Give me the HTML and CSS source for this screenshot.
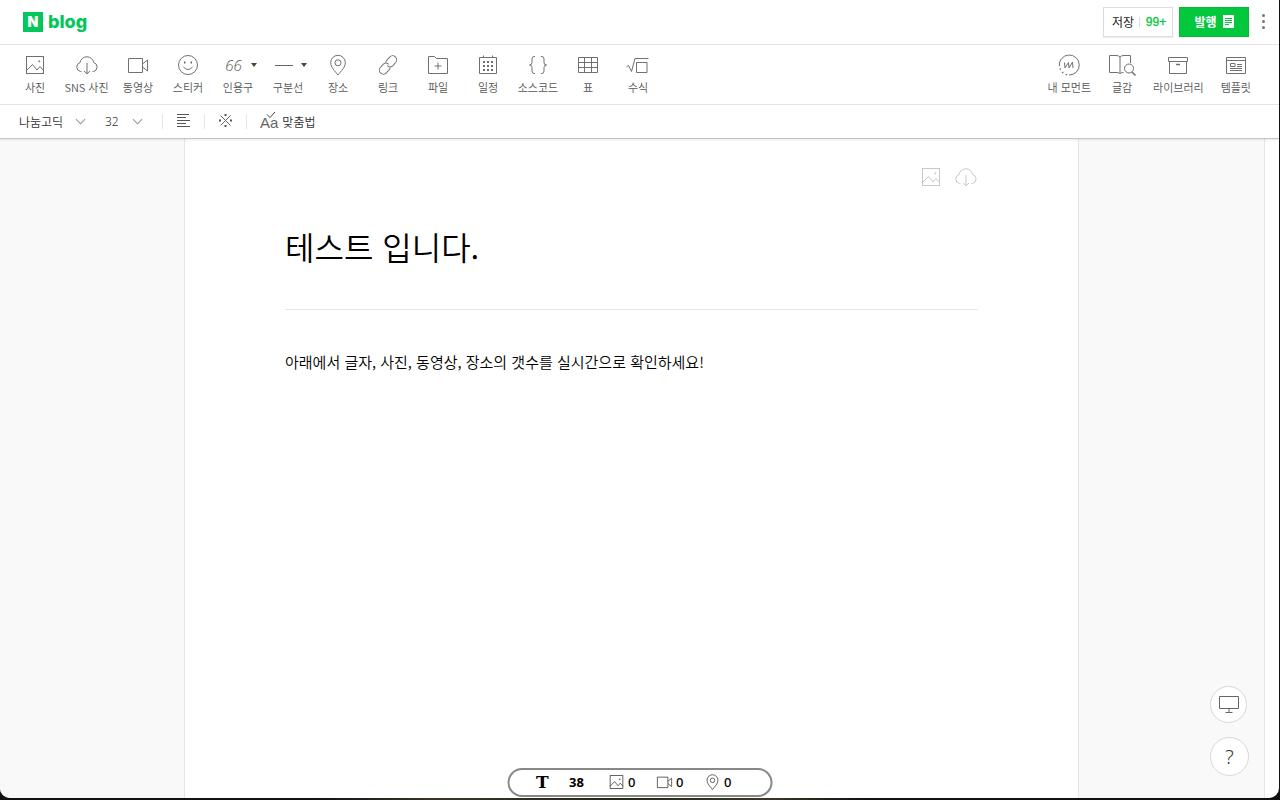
FILE: index.html
```html
<!DOCTYPE html>
<html lang="ko">
<head>
<meta charset="utf-8">
<title>blog</title>
<link rel="stylesheet" href="styles.css">
</head>
<body>
<svg class="defs" aria-hidden="true">
  <symbol id="photo" viewBox="0 0 24 24"><rect x="3.5" y="3.5" width="17" height="17"/><path d="M3.5 17.5 9.500 11.5 14 17 17 13.5 20.5 17.5"/><circle cx="16.300" cy="8.300" r="0.6"/></symbol>
  <symbol id="cloud" viewBox="0 0 24 24"><path d="M6.500 18.5H5.500A4.600 4.600 0 0 1 5 9.600 7 7 0 0 1 18.800 9.600 4.600 4.600 0 0 1 18.500 18.500H17.500M12 10V21M9 18 12 20.800 15 18"/></symbol>
  <symbol id="video" viewBox="0 0 24 24"><path d="M2.500 5.500H16.500V19.500H2.500ZM16.500 11 21.500 7V18L16.500 14"/></symbol>
  <symbol id="pin" viewBox="0 0 24 24"><path d="M12 22C9 18 4.700 14.500 4.700 9.600A7.300 7.300 0 0 1 19.300 9.600C19.300 14.500 15 18 12 22Z"/><circle cx="12" cy="9.800" r="3"/></symbol>
</svg>
<div class="window">
  <header class="header">
    <a class="logo" href="#"><span class="logo-mark">N</span><span class="logo-text">blog</span></a>
    <div class="actions">
      <div class="save"><button class="save-btn" type="button">저장</button><button class="save-count" type="button">99+</button></div>
      <button class="publish" type="button">발행
        <svg width="11" height="13" viewBox="0 0 11 13"><path d="M0 0H11V13H0Z" fill="#fff"/><path d="M2 3.500H9M2 5.500H9M2 7.500H9M2 9.500H6" stroke="#03c73c"/></svg>
      </button>
      <button class="more" type="button" aria-label="더보기"><i></i><i></i><i></i></button>
    </div>
  </header>

  <nav class="toolbar">
    <div class="tools">
      <button class="tool" type="button"><svg class="icon"><use href="#photo"/></svg>사진</button>
      <button class="tool tool-wide" type="button"><svg class="icon"><use href="#cloud"/></svg>SNS 사진</button>
      <button class="tool" type="button"><svg class="icon"><use href="#video"/></svg>동영상</button>
      <button class="tool" type="button"><svg class="icon" viewBox="0 0 24 24"><circle cx="12" cy="12" r="9.500"/><path d="M7.500 14Q12 19 16.500 14"/><path class="solid" d="M8 8.500H9.500V10.500H8ZM14.500 8.500H16V10.500H14.500Z"/></svg>스티커</button>
      <button class="tool" type="button"><span class="split"><span class="quote">66</span><i class="caret"></i></span>인용구</button>
      <button class="tool" type="button"><span class="split"><span class="dash"></span><i class="caret"></i></span>구분선</button>
      <button class="tool" type="button"><svg class="icon"><use href="#pin"/></svg>장소</button>
      <button class="tool" type="button"><svg class="icon" viewBox="0 0 24 24"><g transform="rotate(-48 12 12)"><path d="M11 12A4 4 0 0 0 14.500 16H19A4 4 0 0 0 19 8H14.500Q13.500 8 12.500 8.700"/><path d="M13 12A4 4 0 0 0 9.500 8H5A4 4 0 0 0 5 16H9.500Q10.500 16 11.500 15.300"/></g></svg>링크</button>
      <button class="tool" type="button"><svg class="icon" viewBox="0 0 24 24"><path d="M2.500 3.500H8.500L10.500 5.500H21.500V20.500H2.500ZM12 9.500V16.500M8.500 13H15.500"/></svg>파일</button>
      <button class="tool" type="button"><svg class="icon" viewBox="0 0 24 24"><path d="M3.500 4.500H20.500V20.500H3.500ZM7.500 2.500V5M16.500 2.500V5"/><path d="M7 9H17M7 13H17M7 17H17" stroke-dasharray="2 2" stroke-width="2"/></svg>일정</button>
      <button class="tool" type="button"><svg class="icon" viewBox="0 0 24 24"><path d="M9 3.500H8Q6 3.500 6 6V9.500Q6 12 3.500 12 6 12 6 14.500V18Q6 20.500 8 20.500H9M15 3.500H16Q18 3.500 18 6V9.500Q18 12 20.500 12 18 12 18 14.500V18Q18 20.500 16 20.500H15"/></svg>소스코드</button>
      <button class="tool" type="button"><svg class="icon" viewBox="0 0 24 24"><path d="M2.500 4.500H21.500V19.500H2.500ZM8.500 4.500V19.500M15.500 4.500V19.500M2.500 9.500H21.500M2.500 14.500H21.500"/></svg>표</button>
      <button class="tool" type="button"><svg class="icon" viewBox="0 0 24 24"><path d="M0.500 14 2.500 12.500 5.500 18.500 9 5.500H22.500M10.500 9.500H21V19.500H10.500Z"/></svg>수식</button>
    </div>
    <div class="panels">
      <button class="panel" type="button"><svg class="icon" viewBox="0 0 24 24"><path d="M2.300 13A10 10 0 1 1 12 22"/><path d="M3 15.500 3.500 16.700M5.200 19 6.200 20M8.700 21.400 10 21.800" stroke-width="1.500"/><path d="M7.500 9.500 8 15 11.500 9.500 12 15 15.500 9 16 15"/></svg>내 모먼트</button>
      <button class="panel" type="button"><svg class="icon icon-wide" viewBox="0 0 28 24"><path d="M12 20.500Q11 19.500 8 19.500H1.500V2.500H8Q11 2.500 12 4 13 2.500 16 2.500H22.500V10M12 4V20.500M12 20.500Q13 19.500 15.500 19.500"/><circle cx="21" cy="15.500" r="4.500"/><path d="M24 19 27.500 22.500" stroke-width="1.500"/></svg>글감</button>
      <button class="panel" type="button"><svg class="icon" viewBox="0 0 24 24"><path d="M2.500 4.500H21.500V8.500H2.500ZM3.500 8.500V20.500H20.500V8.500"/><path d="M10 11.500H14" stroke-width="1.500"/></svg>라이브러리</button>
      <button class="panel" type="button"><svg class="icon" viewBox="0 0 24 24"><path d="M2.500 4.500H21.500V20.500H2.500ZM2.500 7.500H21.500M6.500 10.500H11V13.500H6.500ZM13 11.500H18M13 13.500H18M6 15.500H18M6 17.500H18"/></svg>템플릿</button>
    </div>
  </nav>

  <div class="format">
    <button class="pick pick-font" type="button">나눔고딕<i class="chevron"></i></button>
    <button class="pick pick-size" type="button">32<i class="chevron"></i></button>
    <button class="cell" type="button" aria-label="정렬"><svg width="14" height="14" viewBox="0 0 14 14"><path d="M0 0.500H12M0 3.500H9M0 6.500H13M0 9.500H9M0 12.500H13" stroke="#555"/></svg></button>
    <button class="cell" type="button" aria-label="특수문자"><svg width="14" height="14" viewBox="0 0 14 14"><path d="M1.500 1.500 11.500 11.500M11.500 1.500 1.500 11.500" stroke="#666"/><path d="M5.500 0H7.500V2H5.500ZM5.500 11H7.500V13H5.500ZM0 5.500H2V7.500H0ZM11 5.500H13V7.500H11Z" fill="#555"/></svg></button>
    <button class="cell spell" type="button"><span class="aa">Aa<svg class="check" width="10" height="8" viewBox="0 0 10 8"><path d="M1 3.500 4 6.500 9 1" stroke="#444"/></svg></span>맞춤법</button>
  </div>

  <main class="canvas">
    <article class="paper">
      <div class="cover-tools">
        <button type="button" aria-label="사진"><svg class="icon"><use href="#photo"/></svg></button>
        <button type="button" aria-label="SNS 사진"><svg class="icon"><use href="#cloud"/></svg></button>
      </div>
      <h1 class="title">테스트 입니다.</h1>
      <p class="text">아래에서 글자, 사진, 동영상, 장소의 갯수를 실시간으로 확인하세요!</p>
    </article>
  </main>

  <div class="floating">
    <button class="round" type="button" aria-label="화면"><svg width="20" height="18" viewBox="0 0 20 18"><path d="M0.500 0.500H19.500V12.500H0.500ZM10 12.500V16M6.500 16.500H13.500" stroke="#666"/></svg></button>
    <button class="round round-help" type="button">?</button>
  </div>

  <div class="counter">
    <span class="count-t">T</span>
    <b class="count-chars">38</b>
    <span class="count"><svg><use href="#photo"/></svg>0</span>
    <span class="count"><svg><use href="#video"/></svg>0</span>
    <span class="count count-pin"><svg><use href="#pin"/></svg>0</span>
  </div>
</div>
</body>
</html>
```

FILE: styles.css
```css
* { box-sizing: border-box; }
body {
  margin: 0;
  padding: 0 1px 2px 0;
  height: 100vh;
  background: linear-gradient(90deg, #111 24%, #3a3428 34%, #26281c 48%, #3c3628 60%, #111 68%);
  font-family: "Noto Sans CJK KR", sans-serif;
  color: #333;
}
button {
  border: 0;
  padding: 0;
  background: none;
  font: inherit;
  color: inherit;
}
svg { fill: none; display: block; }
.defs { display: none; }
.window {
  position: relative;
  height: 100%;
  display: flex;
  flex-direction: column;
  background: #fff;
  border-radius: 0 0 10px 10px;
  overflow: hidden;
}

.header {
  display: flex;
  align-items: center;
  justify-content: space-between;
  height: 45px;
  padding: 0 9px 1px 23px;
  border-bottom: 1px solid #e5e5e5;
}
.logo {
  display: flex;
  align-items: center;
  gap: 5px;
  color: #03c75a;
  text-decoration: none;
}
.logo-mark {
  width: 20px;
  height: 20px;
  background: #03c75a;
  color: #fff;
  font: 900 14px/20px Inter, sans-serif;
  text-align: center;
}
.logo-text { font: 800 18px/20px Inter, sans-serif; }
.actions { display: flex; align-items: center; }
.save {
  display: flex;
  align-items: center;
  height: 30px;
  width: 70px;
  border: 1px solid #ddd;
  box-shadow: 0 1px 1px #eee;
  font-size: 12px;
  color: #222;
}
.save-btn { width: 36px; padding-left: 3px; border-right: 1px solid #ddd; line-height: 10px; }
.save-count { flex: 1; font: 12px/14px "Liberation Sans", sans-serif; color: #03c73c; -webkit-text-stroke: 0.3px #03c73c; }
.publish {
  display: flex;
  align-items: center;
  justify-content: center;
  gap: 6px;
  width: 70px;
  height: 30px;
  margin-left: 6px;
  border: 1px solid #04b838;
  background: #03c73c;
  color: #fff;
  font-size: 12px;
  font-weight: 700;
}
.more {
  display: flex;
  flex-direction: column;
  align-items: center;
  gap: 3px;
  width: 13px;
  margin-left: 8px;
}
.more i { width: 3px; height: 3px; border-radius: 50%; background: #777; }

.toolbar {
  display: flex;
  justify-content: space-between;
  height: 60px;
  padding: 8px 28px 0 10px;
  border-bottom: 1px solid #e5e5e5;
  font-size: 11px;
  font-weight: 350;
  line-height: 16px;
  color: #555;
}
.tools { display: flex; }
.panels { display: flex; gap: 17px; }
.tool, .panel {
  display: flex;
  flex-direction: column;
  align-items: center;
  gap: 2px;
  white-space: nowrap;
}
.tool { width: 50px; }
.tool-wide { width: 53px; }
.icon { width: 24px; height: 24px; stroke: #707070; }
.icon-wide { width: 28px; }
.solid { fill: #666; stroke: none; }
.split { display: flex; align-items: center; gap: 8px; height: 24px; padding-left: 5px; }
.quote { width: 18px; font: italic 300 15px/24px "Open Sans", sans-serif; }
.dash { width: 18px; border-top: 1px solid #666; }
.caret { border: 3px solid transparent; border-top: 4px solid #444; border-bottom: 0; }

.format {
  position: relative;
  display: flex;
  align-items: center;
  height: 34px;
  padding-left: 19px;
  padding-bottom: 1px;
  border-bottom: 1px solid #c4c4c4;
  box-shadow: 0 1px 2px rgba(0, 0, 0, 0.1);
  font-size: 12px;
  font-weight: 350;
  color: #333;
}
.pick { display: flex; align-items: center; justify-content: space-between; padding-right: 2px; }
.pick-font { width: 67px; }
.pick-size { width: 38px; margin: 0 19px; font-family: "Noto Sans", sans-serif; }
.chevron {
  width: 7px;
  height: 7px;
  margin-bottom: 4px;
  border: solid #999;
  border-width: 0 1px 1px 0;
  transform: rotate(45deg);
}
.cell {
  display: flex;
  align-items: center;
  justify-content: center;
  width: 42px;
  height: 15px;
  border-left: 1px solid #e5e5e5;
}
.spell { width: auto; padding-left: 13px; gap: 4px; }
.aa { position: relative; padding-top: 3px; font: 15px/15px "Liberation Sans", sans-serif; color: #666; }
.check { position: absolute; left: 6px; top: -1px; }

.canvas {
  flex: 1;
  display: flex;
  justify-content: center;
  margin-right: 14px;
  padding-right: 1px;
  border-right: 1px solid #e5e5e5;
  background: #f9f9f9;
}
.paper {
  width: 895px;
  padding: 26px 100px;
  border: solid #e5e5e5;
  border-width: 0 1px;
  background: #fff;
}
.cover-tools { display: flex; justify-content: flex-end; gap: 11px; }
.cover-tools .icon { stroke: #c8c8c8; }
.title {
  margin: 0;
  padding: 33px 0 39px;
  border-bottom: 1px solid #e5e5e5;
  font-size: 32px;
  line-height: 48px;
  font-weight: 350;
  color: #000;
}
.text { margin: 39px 0 0; font-size: 15px; line-height: 26px; font-weight: 350; color: #000; }

.floating {
  position: absolute;
  right: 30px;
  bottom: 22px;
  display: flex;
  flex-direction: column;
  gap: 14px;
}
.round {
  display: flex;
  align-items: center;
  justify-content: center;
  width: 37px;
  height: 37px;
  border: 1px solid #d8d8d8;
  border-radius: 50%;
  background: #fff;
}
.round-help { width: 39px; height: 39px; font: 300 20px/20px "Noto Sans", sans-serif; }

.counter {
  position: absolute;
  left: 50%;
  bottom: 1px;
  transform: translateX(-50%);
  display: flex;
  align-items: center;
  width: 265px;
  height: 29px;
  padding: 0 0 2px 27px;
  border: 2px solid #888;
  border-radius: 15px;
  background: #fff;
  font: 500 13px/20px "Noto Sans", sans-serif;
  color: #000;
}
.count-t { width: 33px; font: 700 17px/20px "DejaVu Serif", serif; }
.count-chars { width: 38px; }
.count { display: flex; align-items: center; gap: 3px; width: 48px; }
.count svg { width: 18px; height: 18px; stroke: #333; }
.count-pin svg { height: 20px; }
```
